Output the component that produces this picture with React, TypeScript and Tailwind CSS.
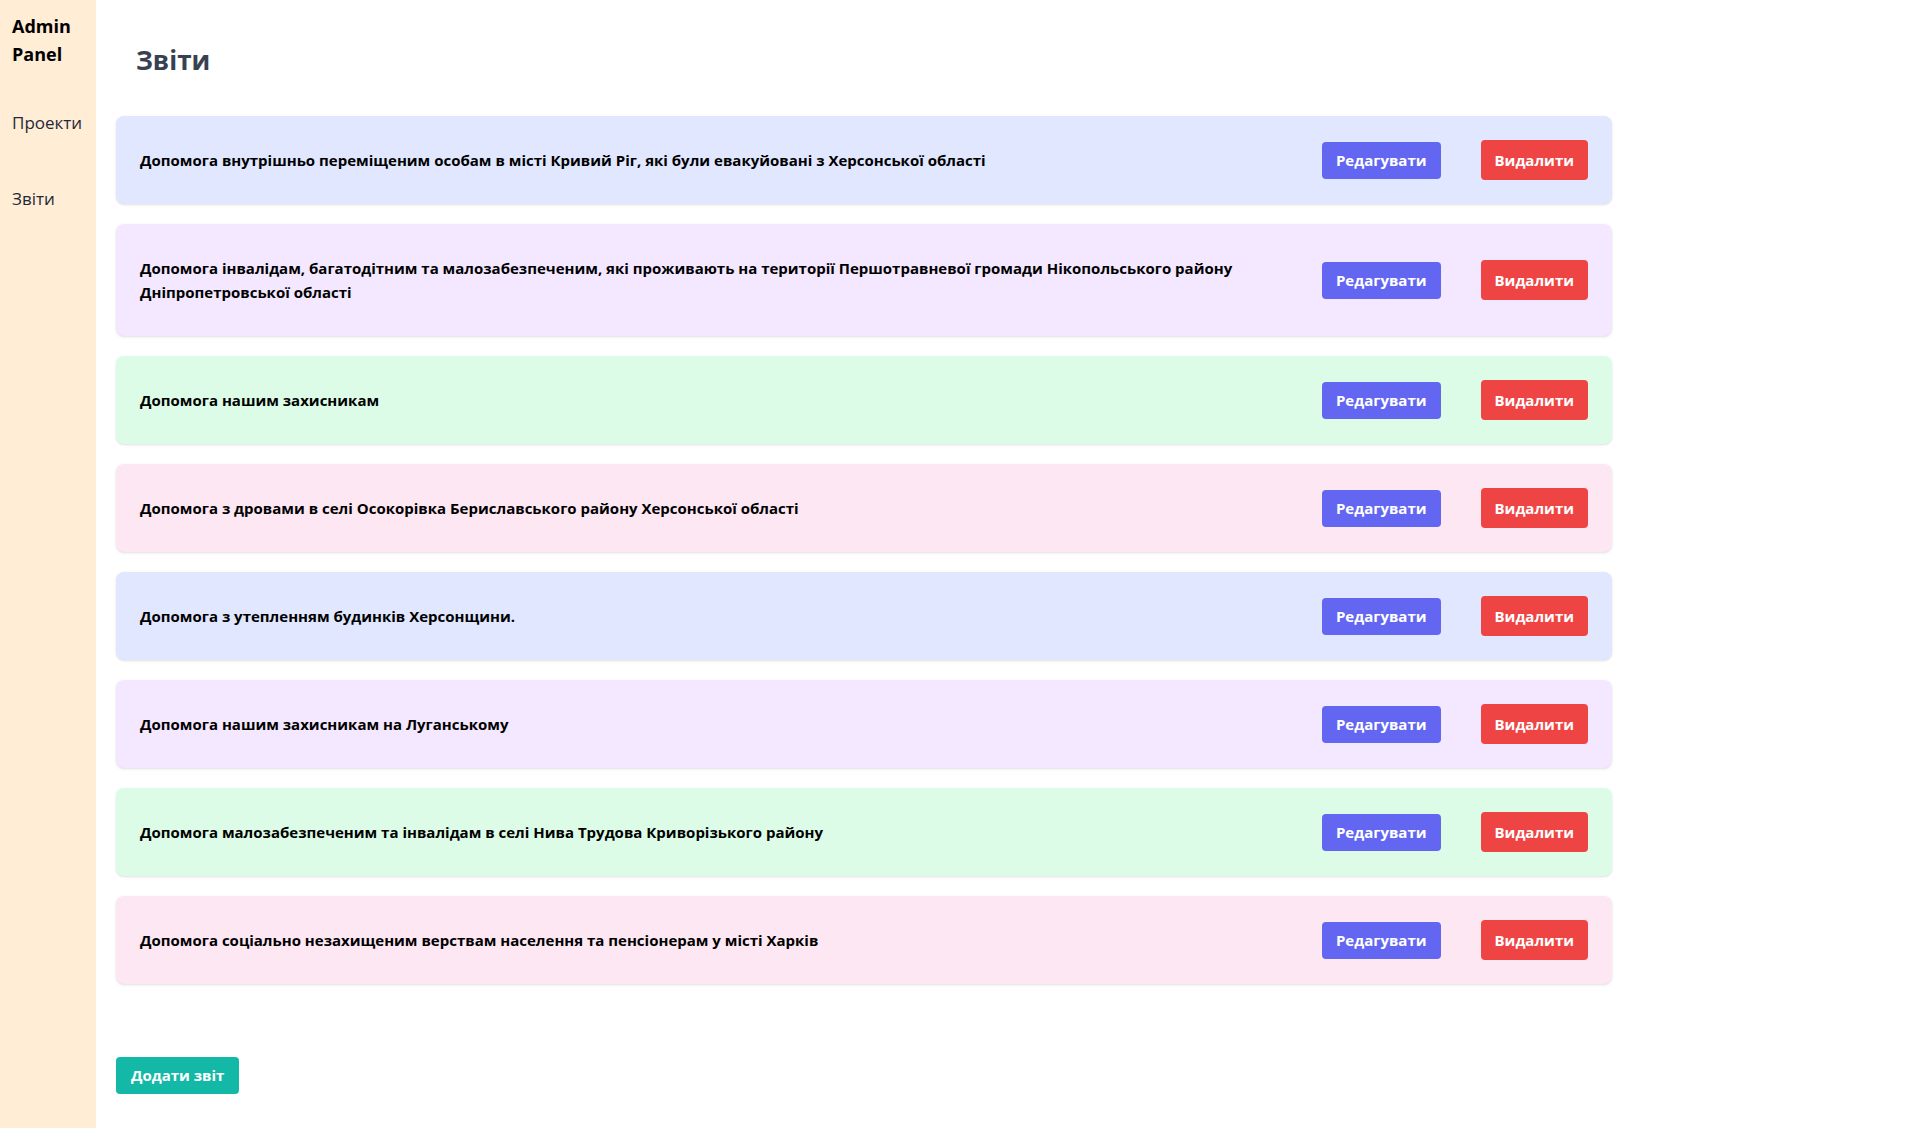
import React from 'react';

interface Report {
  id: number;
  title: string;
  color: string;
}

const reports: Report[] = [
  { id: 1, title: 'Допомога внутрішньо переміщеним особам в місті Кривий Ріг, які були евакуйовані з Херсонської області', color: 'bg-[#e0e7ff]' },
  { id: 2, title: 'Допомога інвалідам, багатодітним та малозабезпеченим, які проживають на території Першотравневої громади Нікопольського району Дніпропетровської області', color: 'bg-[#f3e8ff]' },
  { id: 3, title: 'Допомога нашим захисникам', color: 'bg-[#dcfce7]' },
  { id: 4, title: 'Допомога з дровами в селі Осокорівка Бериславського району Херсонської області', color: 'bg-[#fce7f3]' },
  { id: 5, title: 'Допомога з утепленням будинків Херсонщини.', color: 'bg-[#e0e7ff]' },
  { id: 6, title: 'Допомога нашим захисникам на Луганському', color: 'bg-[#f3e8ff]' },
  { id: 7, title: 'Допомога малозабезпеченим та інвалідам в селі Нива Трудова Криворізького району', color: 'bg-[#dcfce7]' },
  { id: 8, title: 'Допомога соціально незахищеним верствам населення та пенсіонерам у місті Харків', color: 'bg-[#fce7f3]' },
];

const App: React.FC = () => {
  return (
    <div className="flex min-h-screen font-['Open_Sans',sans-serif] text-gray-900">
      <aside className="w-24 shrink-0 bg-[#ffedd5] px-3 pt-3">
        <h1 className="text-lg leading-7 font-bold text-black">Admin Panel</h1>
        <nav className="mt-[43px] flex flex-col gap-[52px]">
          <a href="#" className="text-[17px] leading-6 text-[#1f2937]">Проекти</a>
          <a href="#" className="text-[17px] leading-6 text-[#1f2937]">Звіти</a>
        </nav>
      </aside>

      <main className="flex-grow px-5 pb-8">
        <h2 className="pl-[20px] pt-[42px] mb-[38px] text-[26px] leading-9 font-bold text-[#374151]">Звіти</h2>

        <div className="flex w-[1496px] flex-col gap-5">
          {reports.map((r) => (
            <div key={r.id} className={`flex items-center justify-between gap-8 rounded-lg px-6 py-6 shadow ${r.color}`}>
              <p className="flex-1 py-2 text-[15px] leading-6 font-bold text-black">{r.title}</p>
              <div className="flex shrink-0 items-center gap-10">
                <button className="h-[37px] rounded bg-[#6366f1] px-[14px] text-[15px] font-bold text-white">Редагувати</button>
                <button className="h-10 rounded bg-[#ef4444] px-[14px] text-[15px] font-bold text-white">Видалити</button>
              </div>
            </div>
          ))}
        </div>

        <button className="mt-[73px] h-[37px] rounded bg-[#14b8a6] px-[15px] text-[15px] font-bold text-white">Додати звіт</button>
      </main>
    </div>
  );
};

export default App;
